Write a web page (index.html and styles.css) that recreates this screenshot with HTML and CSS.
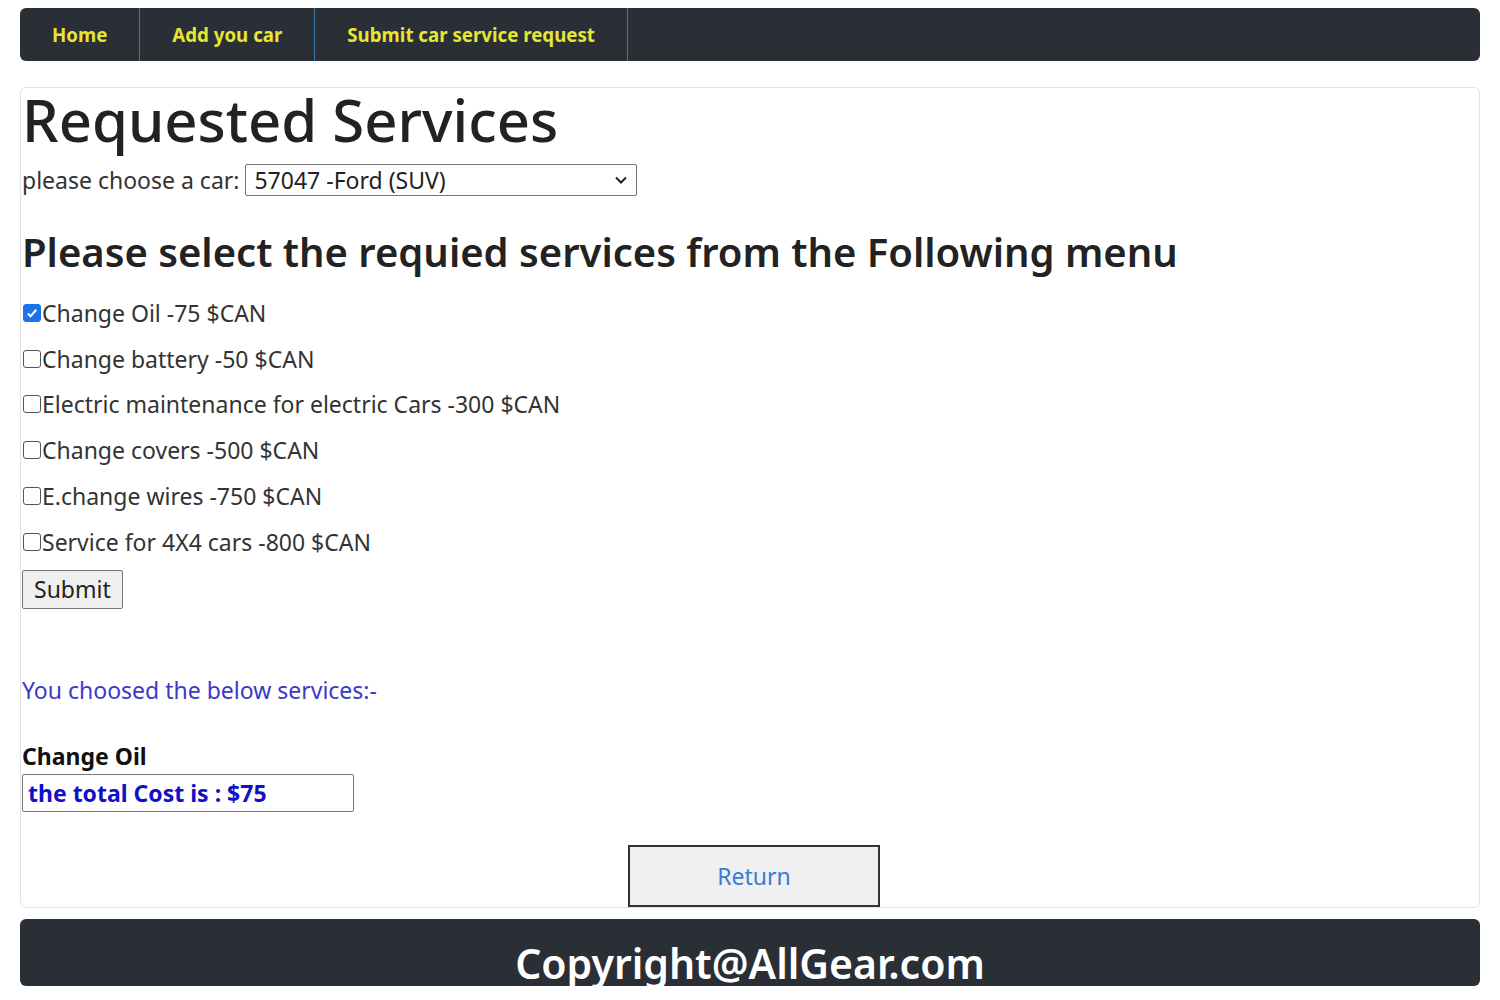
FILE: index.html
```html
<!DOCTYPE html>
<html>
<head>
<meta charset="utf-8">
<link rel="stylesheet" href="styles.css">
</head>
<body>
<nav class="nav">
  <a class="nav-link" href="#">Home</a>
  <a class="nav-link" href="#">Add you car</a>
  <a class="nav-link" href="#">Submit car service request</a>
</nav>
<main class="card">
  <h1 class="title">Requested Services</h1>
  <div class="car-row">
    <span>please choose a car:</span>
    <div class="select">
      <span>57047 -Ford (SUV)</span>
      <svg class="chev" width="14" height="10" viewBox="0 0 14 10"><path d="M2 2.5 L7 7.5 L12 2.5" fill="none" stroke="#222" stroke-width="2"/></svg>
    </div>
  </div>
  <h2 class="subtitle">Please select the requied services from the Following menu</h2>
  <div class="options">
    <label class="opt"><span class="cb checked"><svg width="17" height="17" viewBox="0 0 17 17"><path d="M4 8.5 L7 11.5 L13 4.5" fill="none" stroke="#fff" stroke-width="2.2"/></svg></span>Change Oil -75 $CAN</label>
    <label class="opt"><span class="cb"></span>Change battery -50 $CAN</label>
    <label class="opt"><span class="cb"></span>Electric maintenance for electric Cars -300 $CAN</label>
    <label class="opt"><span class="cb"></span>Change covers -500 $CAN</label>
    <label class="opt"><span class="cb"></span>E.change wires -750 $CAN</label>
    <label class="opt"><span class="cb"></span>Service for 4X4 cars -800 $CAN</label>
  </div>
  <button class="submit">Submit</button>
  <p class="chosen">You choosed the below services:-</p>
  <p class="item">Change Oil</p>
  <div class="total">the total Cost is : $75</div>
  <div class="return-wrap"><button class="return">Return</button></div>
</main>
<footer class="footer">Copyright@AllGear.com</footer>
</body>
</html>
```
FILE: styles.css
```css
* { box-sizing: border-box; }
body {
  margin: 0;
  padding: 8px 20px 0 20px;
  font-family: "Noto Sans", "Open Sans", sans-serif;
  color: #212529;
  background: #fff;
}
.nav {
  display: flex;
  height: 53px;
  background: #2a2f36;
  border-radius: 6px;
}
.nav-link {
  display: flex;
  align-items: center;
  padding: 0 32px 0 32px;
  color: #e6e633;
  font-weight: 700;
  font-size: 18.7px;
  text-decoration: none;
  border-right: 1px solid #3a78a8;
}
.card {
  margin-top: 26px;
  border: 1px solid #e2e2e2;
  border-radius: 6px;
  padding: 0 1px;
  display: flex;
  flex-direction: column;
  align-items: flex-start;
}
.title {
  margin: 0;
  font-size: 58px;
  font-weight: 500;
  line-height: 64px;
  color: #222;
}
.car-row {
  display: flex;
  align-items: center;
  gap: 6px;
  height: 32px;
  font-size: 23px;
  color: #333;
  margin-top: 12px;
}
.select {
  width: 392px;
  height: 32px;
  border: 1px solid #777;
  border-radius: 2px;
  display: flex;
  align-items: center;
  justify-content: space-between;
  padding: 0 8px;
  font-size: 23px;
  color: #222;
}
.subtitle {
  margin: 31px 0 0 0;
  font-size: 40px;
  font-weight: 600;
  line-height: 50px;
  color: #222;
}
.options {
  display: flex;
  flex-direction: column;
  margin-top: 13px;
}
.opt {
  display: flex;
  align-items: center;
  height: 45.8px;
  font-size: 23px;
  color: #333;
}
.cb {
  width: 18px;
  height: 18px;
  border: 1.5px solid #555;
  border-radius: 3px;
  margin: 0 1px 0 1px;
  display: flex;
}
.cb.checked {
  background: #1a73e8;
  border-color: #1a73e8;
}
.submit {
  margin-top: 5px;
  font-family: inherit;
  font-size: 23px;
  padding: 0 11px;
  height: 39px;
  background: #efefef;
  border: 1px solid #777;
  border-radius: 2px;
  color: #222;
}
.chosen {
  margin: 66px 0 0 0;
  line-height: 30px;
  font-size: 23px;
  color: #3a3ac8;
}
.item {
  margin: 36px 0 0 0;
  line-height: 30px;
  font-size: 23px;
  font-weight: 700;
  color: #111;
}
.total {
  margin-top: 3px;
  width: 332px;
  height: 38px;
  border: 1px solid #777;
  border-radius: 2px;
  padding: 0 5px;
  display: flex;
  align-items: center;
  font-size: 23px;
  font-weight: 700;
  color: #1010c8;
}
.return-wrap {
  align-self: stretch;
  display: flex;
  justify-content: center;
  margin-top: 33px;
}
.return {
  width: 252px;
  height: 62px;
  margin-left: 8px;
  background: #f0f0f0;
  border: 2px solid #333;
  font-family: inherit;
  font-size: 23px;
  color: #3a7bd5;
}
.footer {
  margin-top: 11px;
  height: 67px;
  padding-top: 21px;
  background: #2a2f36;
  border-radius: 6px;
  color: #fff;
  display: flex;
  align-items: center;
  justify-content: center;
  font-size: 41px;
  font-weight: 600;
}
```
